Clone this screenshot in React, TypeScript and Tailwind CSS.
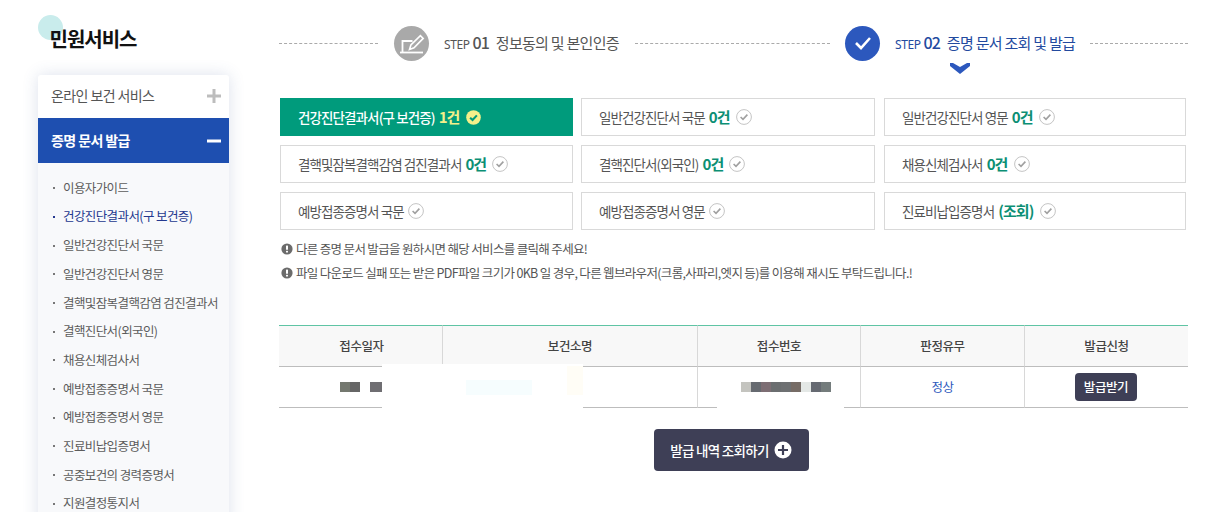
const F = '[font-family:"Noto_Sans_CJK_KR","Noto_Sans",sans-serif]';

function CheckMark({ active }: { active?: boolean }) {
  if (active) {
    return (
      <svg width="15" height="15" viewBox="0 0 16 16" className="shrink-0">
        <circle cx="8" cy="8" r="7.8" fill="#f4f08a" />
        <path d="M4.4 8.2 7 10.7l4.6-5" fill="none" stroke="#009b7c" strokeWidth="2.2" />
      </svg>
    );
  }
  return (
    <svg width="16" height="16" viewBox="0 0 16 16" className="shrink-0">
      <circle cx="8" cy="8" r="7.4" fill="#fff" stroke="#c4c4c4" strokeWidth="1" />
      <path d="M4.6 8 7 10.4l4.4-4.8" fill="none" stroke="#a0a0a0" strokeWidth="1.6" />
    </svg>
  );
}

function Alert() {
  return (
    <svg width="12" height="12" viewBox="0 0 12 12" className="shrink-0">
      <circle cx="6" cy="6" r="5.6" fill="#6b6b6b" />
      <rect x="5" y="2.4" width="2" height="4.4" rx="0.6" fill="#fff" />
      <rect x="5" y="7.8" width="2" height="1.8" rx="0.6" fill="#fff" />
    </svg>
  );
}

const subMenu = [
  "이용자가이드",
  "건강진단결과서(구 보건증)",
  "일반건강진단서 국문",
  "일반건강진단서 영문",
  "결핵및잠복결핵감염 검진결과서",
  "결핵진단서(외국인)",
  "채용신체검사서",
  "예방접종증명서 국문",
  "예방접종증명서 영문",
  "진료비납입증명서",
  "공중보건의 경력증명서",
  "지원결정통지서",
];

const cards: { label: string; count?: string; active?: boolean }[] = [
  { label: "건강진단결과서(구 보건증)", count: "1건", active: true },
  { label: "일반건강진단서 국문", count: "0건" },
  { label: "일반건강진단서 영문", count: "0건" },
  { label: "결핵및잠복결핵감염 검진결과서", count: "0건" },
  { label: "결핵진단서(외국인)", count: "0건" },
  { label: "채용신체검사서", count: "0건" },
  { label: "예방접종증명서 국문" },
  { label: "예방접종증명서 영문" },
  { label: "진료비납입증명서", count: "(조회)" },
];

function Sidebar() {
  return (
    <aside className="w-[191px] shrink-0 ml-[38px]">
      <div className="relative h-[75px]">
        <div className="absolute left-0 top-[15px] w-[25px] h-[25px] rounded-full bg-[#c9ecec]" />
        <h1 className="absolute left-[11.5px] top-[24px] text-[20px] leading-[30px] font-bold tracking-[-1px] text-[#111]">
          민원서비스
        </h1>
      </div>
      <div className="bg-white rounded-t-[3px] shadow-[0_0_16px_rgba(60,90,150,0.18)]">
        <div className="h-[43px] pb-[2px] pl-[13px] pr-[8px] flex items-center justify-between text-[14px] tracking-[-0.6px] text-[#555]">
          <span>온라인 보건 서비스</span>
          <svg width="14" height="14" viewBox="0 0 14 14"><path d="M0 7h14M7 0v14" stroke="#bdbdbd" strokeWidth="3" /></svg>
        </div>
        <div className="h-[45px] pl-[13px] pr-[8px] flex items-center justify-between bg-[#1e4fb0] text-white text-[14px] font-bold tracking-[-0.6px]">
          <span>증명 문서 발급</span>
          <svg width="14" height="14" viewBox="0 0 14 14"><path d="M0 7h14" stroke="#fff" strokeWidth="3" /></svg>
        </div>
        <ul className="bg-[#f8f9fb] pt-[10.8px] pl-[15px] pb-[10px]">
          {subMenu.map((t, i) => (
            <li
              key={t}
              className={`h-[28.7px] flex items-center gap-[8px] text-[12.5px] tracking-[-0.6px] whitespace-nowrap ${i === 1 ? "text-[#24388f]" : "text-[#5c5c5c]"}`}
            >
              <span className={`w-[2px] h-[2px] shrink-0 ${i === 1 ? "bg-[#24388f]" : "bg-[#777]"}`} />
              {t}
            </li>
          ))}
        </ul>
      </div>
    </aside>
  );
}

function StepLabel({ num, text, width }: { num: string; text: string; width: string }) {
  return (
    <div className={`ml-[15px] flex items-baseline whitespace-nowrap ${width}`}>
      <span className="text-[12px] tracking-[-0.4px] [font-family:'Noto_Sans',sans-serif]">STEP</span>
      <span className="ml-[3px] text-[16px] leading-[20px] font-medium tracking-[-1px]">{num}</span>
      <span className="ml-[7px] text-[15px] leading-[20px] tracking-[-0.72px]">{text}</span>
    </div>
  );
}

function Steps() {
  return (
    <div className="relative h-[98px] pt-[25px]">
      <div className="flex items-center h-[36px]">
        <div className="w-[99px] border-t border-dashed border-[#aaa]" />
        <div className="w-[35px] h-[35px] ml-[16px] rounded-full bg-[#a9a9a9] shrink-0">
          <svg width="35" height="35" viewBox="0 0 35 35" fill="none">
            <path d="M8.5 26V15h10" stroke="#fff" strokeWidth="1.8" />
            <path d="M6 26.5h23" stroke="#fff" strokeWidth="1.8" />
            <path d="M15.5 23.5l1.4-4.6L26.4 9.6l2.8 2.8-9.2 9.4z" stroke="#fff" strokeWidth="1.6" />
          </svg>
        </div>
        <div className="text-[#555]"><StepLabel num="01" text="정보동의 및 본인인증" width="w-[175px]" /></div>
        <div className="w-[195px] ml-[16px] border-t border-dashed border-[#aaa]" />
        <div className="w-[35px] h-[35px] ml-[15px] rounded-full bg-[#2c58bd] flex items-center justify-center shrink-0">
          <svg width="20" height="16" viewBox="0 0 20 16" fill="none">
            <path d="M3 8l5 5 9-10" stroke="#fff" strokeWidth="2.6" />
          </svg>
        </div>
        <div className="text-[#234a9f]"><StepLabel num="02" text="증명 문서 조회 및 발급" width="w-[180px]" /></div>
        <div className="w-[98px] ml-[15px] border-t border-dashed border-[#aaa]" />
      </div>
      <svg width="20" height="11" viewBox="0 0 20 11" className="absolute left-[671px] top-[63px]">
        <path d="M0 0H3L10 4 17 0H20V3L10 11 0 3z" fill="#2c58bd" />
      </svg>
    </div>
  );
}

function Cards() {
  return (
    <div className="grid grid-cols-[293px_295px_302px] gap-x-[8px] gap-y-[9px] ml-[1px]">
      {cards.map((c) => (
        <div
          key={c.label}
          className={`h-[38px] flex items-center gap-[4px] whitespace-nowrap text-[13.5px] tracking-[-0.9px] [&:nth-child(3n+2)]:w-[294px] ${
            c.active
              ? "pl-[18px] bg-[#009b7c] text-white font-medium"
              : "pl-[17px] bg-white border border-[#d9d9d9] text-[#555]"
          }`}
        >
          <span>{c.label}</span>
          {c.count && (
            <span className={`text-[15px] font-bold tracking-[-0.9px] mr-[2px] ${c.active ? "text-[#f4f08a]" : "text-[#0c8f74]"}`}>{c.count}</span>
          )}
          <CheckMark active={c.active} />
        </div>
      ))}
    </div>
  );
}

const columns = ["접수일자", "보건소명", "접수번호", "판정유무", "발급신청"];

function Mosaic({ colors }: { colors: string[] }) {
  return (
    <div className="flex">
      {colors.map((c, i) => (
        <span key={i} className="w-[10px] h-[10px]" style={{ background: c }} />
      ))}
    </div>
  );
}

function ResultTable() {
  return (
    <div className="relative mt-[40px]">
      <table className="w-[909px] table-fixed border-separate border-spacing-0 text-[12.5px] tracking-[-0.4px] text-[#444]">
        <colgroup>
          <col className="w-[163px]" />
          <col className="w-[255px]" />
          <col className="w-[163px]" />
          <col className="w-[164px]" />
          <col className="w-[164px]" />
        </colgroup>
        <thead>
          <tr className="h-[42px] bg-[#f8f8f8]">
            {columns.map((c, i) => (
              <th key={c} className={`font-medium pt-[1px] border-t border-t-[#5fc4a4] border-b border-b-[#bdbdbd] ${i > 0 ? "border-l border-l-[#d8d8d8]" : "pl-[2px]"}`}>{c}</th>
            ))}
          </tr>
        </thead>
        <tbody>
          <tr className="h-[41px]">
            <td className="border-b border-b-[#bdbdbd]">
              <div className="flex pl-[61px] gap-[10px]">
                <Mosaic colors={["#74786f", "#666666"]} />
                <Mosaic colors={["#6f6e72", "#6f6e72"]} />
              </div>
            </td>
            <td className="border-b border-b-[#bdbdbd] border-l border-l-[#d8d8d8]" />
            <td className="border-b border-b-[#bdbdbd] border-l border-l-[#d8d8d8]">
              <div className="flex pl-[43px]">
                <Mosaic colors={["#c4c4bf", "#666a70", "#7d6e74", "#6b6e70", "#6e7072", "#766c66", "#e4e8e6", "#666a72", "#747c7c"]} />
              </div>
            </td>
            <td className="border-b border-b-[#bdbdbd] border-l border-l-[#d8d8d8] text-center text-[#2c58bd]">정상</td>
            <td className="border-b border-b-[#bdbdbd] border-l border-l-[#d8d8d8] text-center pr-[1px]">
              <span className="inline-flex items-center justify-center w-[62px] h-[28px] rounded-[4px] bg-[#3e3f56] text-white font-medium">발급받기</span>
            </td>
          </tr>
        </tbody>
      </table>
      {/* redaction patches over the table */}
      <div className="absolute left-[103px] top-[39px] w-[201px] h-[46px] bg-white">
        <div className="absolute left-[84px] top-[16px] w-[66px] h-[15px] bg-[#f6fdfe]" />
        <div className="absolute left-[185px] top-[2px] w-[16px] h-[29px] bg-[#fffdf6]" />
      </div>
      <div className="absolute left-[438px] top-[75px] w-[127px] h-[10px] bg-white" />
    </div>
  );
}

export default function App() {
  return (
    <div className={`flex h-[512px] w-[1217px] overflow-hidden bg-white ${F}`}>
      <Sidebar />
      <main className="w-[909px] ml-[50px]">
        <Steps />
        <Cards />
        <div className="mt-[7px] text-[12.5px] tracking-[-0.67px] text-[#555]">
          <p className="h-[24px] flex items-center gap-[3px] ml-[2px]"><Alert />다른 증명 문서 발급을 원하시면 해당 서비스를 클릭해 주세요!</p>
          <p className="h-[24px] flex items-center gap-[3px] ml-[2px]"><Alert />파일 다운로드 실패 또는 받은 PDF파일 크기가 0KB 일 경우, 다른 웹브라우저(크롬,사파리,엣지 등)를 이용해 재시도 부탁드립니다.!</p>
        </div>
        <ResultTable />
        <div className="flex justify-center mt-[21px] pr-[5px]">
          <button className="w-[155px] h-[42px] rounded-[4px] bg-[#3e3f56] text-white text-[13.5px] font-medium tracking-[-0.7px] flex items-center justify-center gap-[5px]">
            발급 내역 조회하기
            <svg width="18" height="18" viewBox="0 0 18 18"><circle cx="9" cy="9" r="8.5" fill="#fff" /><path d="M4 9h10M9 4v10" stroke="#3e3f56" strokeWidth="2.2" /></svg>
          </button>
        </div>
      </main>
    </div>
  );
}
